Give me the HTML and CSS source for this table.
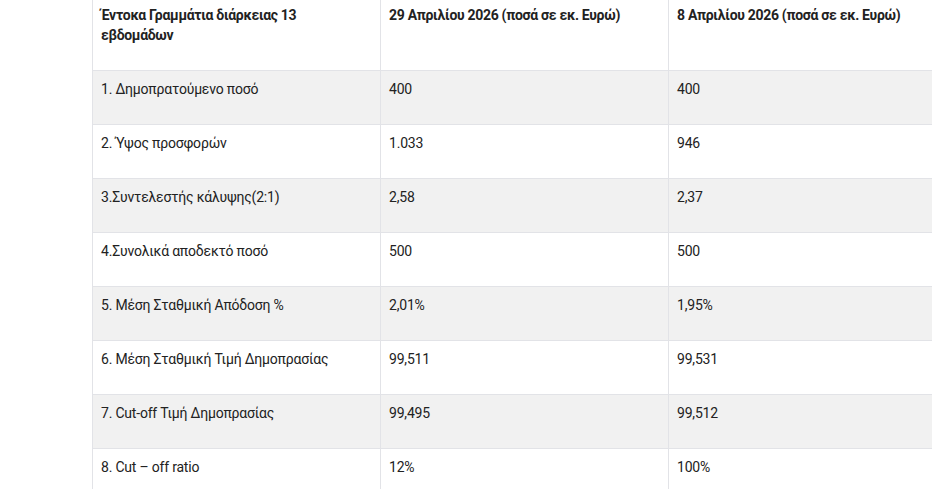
FILE: index.html
```html
<!DOCTYPE html>
<html lang="el">
<head>
<meta charset="utf-8">
<link rel="stylesheet" href="styles.css">
</head>
<body>
<table class="auction">
  <thead>
    <tr>
      <th>Έντοκα Γραμμάτια διάρκειας 13 εβδομάδων</th>
      <th>29 Απριλίου 2026 (ποσά σε εκ. Ευρώ)</th>
      <th>8 Απριλίου 2026 (ποσά σε εκ. Ευρώ)</th>
    </tr>
  </thead>
  <tbody>
    <tr><td>1. Δημοπρατούμενο ποσό</td><td>400</td><td>400</td></tr>
    <tr><td>2. Ύψος προσφορών</td><td>1.033</td><td>946</td></tr>
    <tr><td>3.Συντελεστής κάλυψης(2:1)</td><td>2,58</td><td>2,37</td></tr>
    <tr><td>4.Συνολικά αποδεκτό ποσό</td><td>500</td><td>500</td></tr>
    <tr><td>5. Μέση Σταθμική Απόδοση %</td><td>2,01%</td><td>1,95%</td></tr>
    <tr><td>6. Μέση Σταθμική Τιμή Δημοπρασίας</td><td>99,511</td><td>99,531</td></tr>
    <tr><td>7. Cut-off Τιμή Δημοπρασίας</td><td>99,495</td><td>99,512</td></tr>
    <tr><td>8. Cut – off ratio</td><td>12%</td><td>100%</td></tr>
  </tbody>
</table>
</body>
</html>
```

FILE: styles.css
```css
html, body {
  margin: 0;
  padding: 0;
  background: #ffffff;
  overflow: hidden;
}
body {
  font-family: Roboto, "Noto Sans", sans-serif;
  font-size: 14px;
  color: #222222;
}
.auction {
  margin-left: 92px;
  border-collapse: collapse;
  table-layout: fixed;
  width: 864px;
}
.auction th,
.auction td {
  width: 288px;
  box-sizing: border-box;
  text-align: left;
  vertical-align: top;
  line-height: 20px;
  border-left: 1px solid #e2e3e7;
  border-bottom: 1px solid #e2e3e7;
}
.auction th {
  font-weight: 700;
  letter-spacing: -0.3px;
  height: 70px;
  padding: 5px 16px 25px 8px;
}
.auction td {
  font-weight: 400;
  letter-spacing: -0.2px;
  height: 54px;
  padding: 8px 8px 25px 8px;
}
.auction tbody tr:nth-child(odd) td {
  background: #f1f1f1;
}
```
